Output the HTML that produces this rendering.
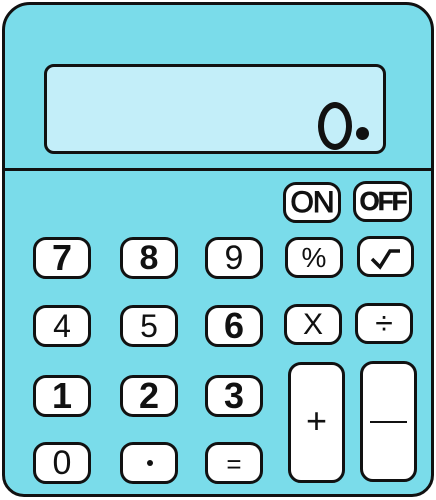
<!DOCTYPE html>
<html><head><style>
body{margin:0;width:436px;height:500px;background:#fff;position:relative;overflow:hidden;font-family:"Liberation Sans","DejaVu Sans",sans-serif}
.body{position:absolute;left:2px;top:2px;width:426px;height:489px;background:#7adcea;border:3px solid #111;border-radius:28px 28px 22px 22px}
.div{position:absolute;left:2px;top:168px;width:432px;height:3px;background:#111}
.scr{position:absolute;left:44px;top:64px;width:336px;height:84px;background:#c3eef9;border:3px solid #111;border-radius:10px}
.k{position:absolute;background:#fff;border:3px solid #111;border-radius:13px;box-sizing:border-box;text-align:center;color:#111;font-weight:bold}
.zo{position:absolute;left:318px;top:102px;width:22px;height:36px;border:6px solid #111;border-radius:50%}
.dot{position:absolute;left:356px;top:127px;width:13px;height:13px;border-radius:50%;background:#111}
</style></head><body>
<div class="body"></div>
<div class="div"></div>
<div class="scr"></div>
<div class="zo"></div><div class="dot"></div>
<div class="k" style="left:283px;top:182px;width:58px;height:41px;font-size:30px;line-height:35px;font-weight:normal;-webkit-text-stroke:1px #111;letter-spacing:-1px">ON</div>
<div class="k" style="left:353px;top:181px;width:59px;height:41px;font-size:26px;line-height:35px;letter-spacing:-2px;-webkit-text-stroke:0.5px #111">OFF</div>

<div class="k" style="left:33px;top:237px;width:58px;height:42px;font-size:36px;line-height:36px">7</div>
<div class="k" style="left:120px;top:237px;width:58px;height:42px;font-size:34px;line-height:36px">8</div>
<div class="k" style="left:205px;top:237px;width:58px;height:42px;font-size:34px;line-height:36px;font-weight:normal">9</div>
<div class="k" style="left:285px;top:237px;width:58px;height:41px;font-size:28px;line-height:35px;font-weight:normal">%</div>
<div class="k" style="left:357px;top:236px;width:57px;height:41px"><svg width="44" height="30" viewBox="0 0 44 30" style="margin-top:4px"><path d="M8 16 L16 24 L26 8 L36 8" stroke="#111" stroke-width="3.5" fill="none"/></svg></div>

<div class="k" style="left:33px;top:305px;width:58px;height:42px;font-size:32px;line-height:36px;font-weight:normal">4</div>
<div class="k" style="left:120px;top:305px;width:58px;height:42px;font-size:32px;line-height:36px;font-weight:normal">5</div>
<div class="k" style="left:205px;top:305px;width:58px;height:42px;font-size:36px;line-height:36px">6</div>
<div class="k" style="left:284px;top:304px;width:58px;height:41px;font-size:30px;line-height:35px;font-weight:normal">X</div>
<div class="k" style="left:355px;top:303px;width:58px;height:41px;font-size:32px;line-height:35px;font-weight:normal">÷</div>

<div class="k" style="left:33px;top:375px;width:58px;height:42px;font-size:36px;line-height:36px">1</div>
<div class="k" style="left:120px;top:375px;width:58px;height:42px;font-size:36px;line-height:36px">2</div>
<div class="k" style="left:205px;top:375px;width:58px;height:42px;font-size:36px;line-height:36px">3</div>
<div class="k" style="left:288px;top:362px;width:57px;height:121px;font-size:36px;line-height:112px;font-weight:normal">+</div>
<div class="k" style="left:360px;top:361px;width:57px;height:121px"><div style="position:absolute;left:7px;right:7px;top:57px;height:2px;background:#111"></div></div>

<div class="k" style="left:33px;top:442px;width:58px;height:42px;font-size:34px;line-height:36px;font-weight:normal">0</div>
<div class="k" style="left:120px;top:442px;width:58px;height:42px"><div style="position:absolute;left:24px;top:15px;width:6px;height:6px;border-radius:50%;background:#111"></div></div>
<div class="k" style="left:205px;top:442px;width:58px;height:42px;font-size:26px;line-height:38px;font-weight:normal">=</div>
</body></html>
